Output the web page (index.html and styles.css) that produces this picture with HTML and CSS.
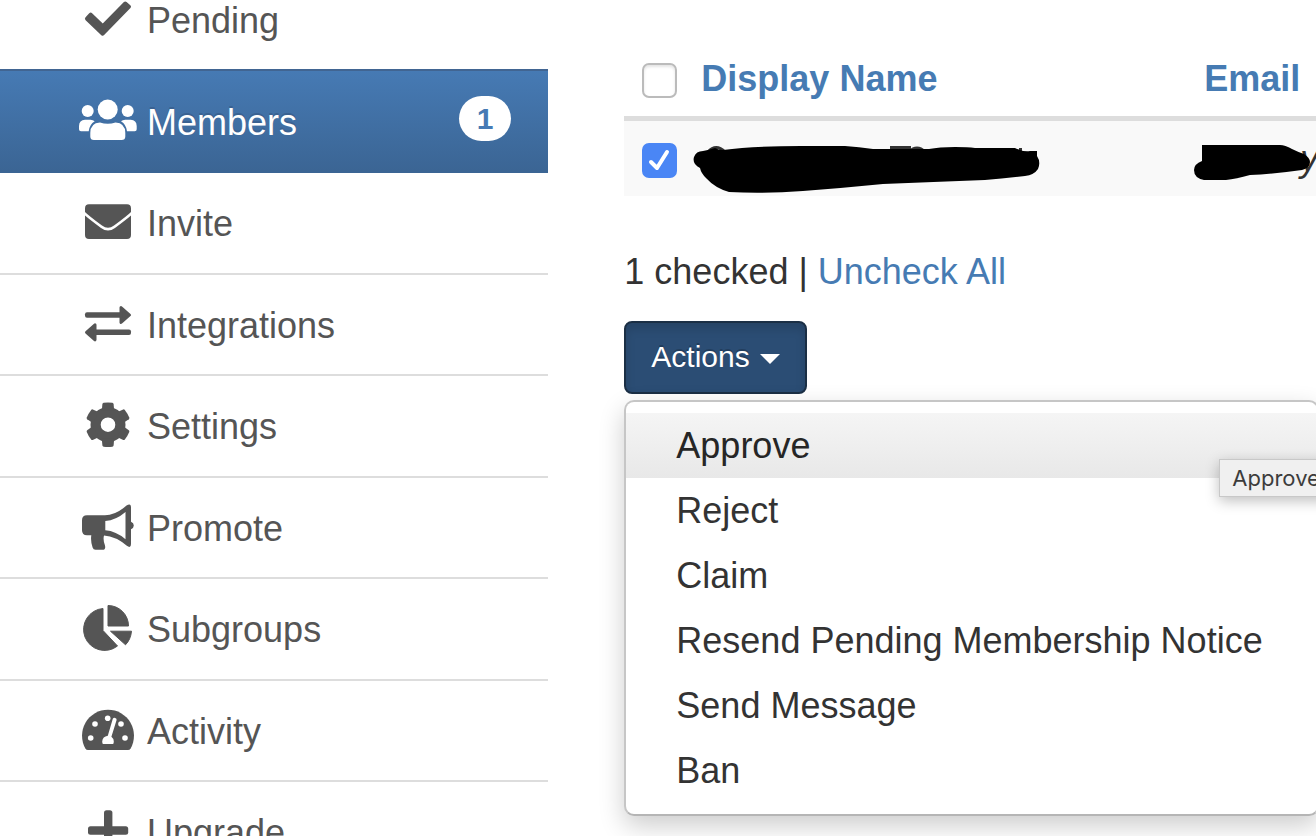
FILE: index.html
```html
<!DOCTYPE html>
<html lang="en">
  <head>
    <meta charset="UTF-8" />
    <meta name="viewport" content="width=device-width, initial-scale=1.0" />
    <title>Members</title>
    <link rel="stylesheet" href="styles.css">
  </head>
  <body>
    <div class="page">
      <!-- Group menu -->
      <nav class="sidebar">
        <ul class="nav-list">
          <li>
            <a class="nav-link" href="#pending">
              <svg class="icon" viewBox="0 0 60 52" aria-hidden="true">
                <path class="round" d="M12.7 20.7 L9 24.7 L24.7 39.7 L51 12.7 L47.3 9.5 L24.7 32.3 Z" />
              </svg>
              Pending
            </a>
          </li>
          <li>
            <a class="nav-link active" href="#members">
              <svg class="icon" viewBox="0 0 60 52" aria-hidden="true">
                <circle cx="29.7" cy="14.5" r="10" />
                <circle cx="9.7" cy="16" r="6" />
                <circle cx="49.7" cy="16" r="6" />
                <path d="M22 27.5 Q29.7 30 37.5 27.5 Q47.3 28 47.3 38 V41.5 Q47.3 45 43.5 45 H16 Q12.3 45 12.3 41.5 V38 Q12.3 28 22 27.5 Z" />
                <path d="M7 24.8 H12.5 Q15 24.8 16.7 26.3 Q11.5 29.5 10.7 36.3 H3 Q1 36.3 1 34.3 V31 Q1.2 25 7 24.8 Z" />
                <path d="M52.7 24.8 H47.2 Q44.7 24.8 43 26.3 Q48.2 29.5 49 36.3 H56.7 Q58.7 36.3 58.7 34.3 V31 Q58.5 25 52.7 24.8 Z" />
              </svg>
              Members
              <span class="badge">1</span>
            </a>
          </li>
          <li>
            <a class="nav-link" href="#invite">
              <svg class="icon" viewBox="0 0 60 52" aria-hidden="true">
                <path d="M11 7.3 H49 Q53 7.3 53 11.5 V15 Q49 19 36 28.5 Q30 33 24 28.5 Q11 19 7 15 V11.5 Q7 7.3 11 7.3 Z" />
                <path d="M7 18.5 Q11 22 23 31 Q30 36 37 31 Q49 22 53 18.5 V38 Q53 42 49 42 H11 Q7 42 7 38 Z" />
              </svg>
              Invite
            </a>
          </li>
          <li>
            <a class="nav-link" href="#integrations">
              <svg class="icon" viewBox="0 0 60 52" aria-hidden="true">
                <rect x="7" y="13.3" width="38" height="5.4" rx="2" />
                <path class="round-thin" d="M43 8.5 L51.5 16 L43 23.5 Z" />
                <rect x="15" y="30.6" width="38" height="5.4" rx="2" />
                <path class="round-thin" d="M17 25.8 L8.5 33.3 L17 40.8 Z" />
              </svg>
              Integrations
            </a>
          </li>
          <li>
            <a class="nav-link" href="#settings">
              <svg class="icon" viewBox="0 0 60 52" aria-hidden="true">
                <g transform="translate(30 24.7)">
                  <path fill-rule="evenodd" d="M0 -17.5 A17.5 17.5 0 1 1 0 17.5 A17.5 17.5 0 1 1 0 -17.5 Z M0 -7.3 A7.3 7.3 0 1 0 0 7.3 A7.3 7.3 0 1 0 0 -7.3 Z" />
                  <path id="tooth" d="M-6.2 -14 L-5.6 -20.8 Q-5.4 -21.8 -4.4 -22 Q0 -22.6 4.4 -22 Q5.4 -21.8 5.6 -20.8 L6.2 -14 Z" />
                  <use href="#tooth" transform="rotate(60)" />
                  <use href="#tooth" transform="rotate(120)" />
                  <use href="#tooth" transform="rotate(180)" />
                  <use href="#tooth" transform="rotate(240)" />
                  <use href="#tooth" transform="rotate(300)" />
                </g>
              </svg>
              Settings
            </a>
          </li>
          <li>
            <a class="nav-link" href="#promote">
              <svg class="icon" viewBox="0 0 60 52" aria-hidden="true">
                <path fill-rule="evenodd" d="M9 13.3 H27 Q38 13 48.5 3.5 Q53 0.5 53 5.5 V19.7 Q55.8 21 55.8 23.5 Q55.8 26 53 27.3 V42 Q53 47 48.5 43.5 Q38 34.5 26 33.5 Q24.8 38 27 43.5 Q28 47.7 24.5 47.7 H17.5 Q15.3 47.7 14.6 45.5 Q12.4 39 13.3 33.2 H9 Q4 33.2 4 28.2 V18.3 Q4 13.3 9 13.3 Z M27.3 19 V28.2 Q38 29 47.5 37.2 V10 Q38 18.2 27.3 19 Z" />
              </svg>
              Promote
            </a>
          </li>
          <li>
            <a class="nav-link" href="#subgroups">
              <svg class="icon" viewBox="0 0 60 52" aria-hidden="true">
                <path class="round-hair" d="M25 5.5 V27.5 L39.5 43 A21 21 0 1 1 25 5.5 Z" />
                <path class="round-hair" d="M30 2.5 A20.5 20.5 0 0 1 50.5 23 H30 Z" />
                <path class="round-hair" d="M32.5 28.2 H53.5 Q52.7 36.5 47.5 41.8 Z" />
              </svg>
              Subgroups
            </a>
          </li>
          <li>
            <a class="nav-link" href="#activity">
              <svg class="icon" viewBox="0 0 60 52" aria-hidden="true">
                <path d="M30 4.7 A26 26 0 0 1 52.5 43.7 Q51.7 45 50 45 H10 Q8.3 45 7.5 43.7 A26 26 0 0 1 30 4.7 Z" />
                <g class="cutout">
                  <circle cx="29.7" cy="13.2" r="2.8" />
                  <circle cx="17" cy="19" r="2.8" />
                  <circle cx="12.7" cy="33" r="2.8" />
                  <circle cx="43" cy="19" r="2.8" />
                  <circle cx="47" cy="33" r="2.8" />
                  <path d="M34.8 13.8 Q35.6 12.4 37.2 12.9 Q38.9 13.5 38.6 15.1 L33.4 31.8 Q35.8 33.6 35.8 36.4 Q35.8 39 34.8 39 H25.2 Q24.2 39 24.2 36.4 Q24.6 31.6 29.8 30.8 Z" />
                </g>
              </svg>
              Activity
            </a>
          </li>
          <li>
            <a class="nav-link" href="#upgrade">
              <svg class="icon" viewBox="0 0 60 52" aria-hidden="true">
                <rect x="26" y="4.3" width="8.4" height="40" rx="2.5" />
                <rect x="10" y="20.3" width="40.2" height="8.4" rx="2.5" />
              </svg>
              Upgrade
            </a>
          </li>
        </ul>
      </nav>

      <!-- Member list -->
      <main class="content">
        <table class="members">
          <thead>
            <tr>
              <th class="check-col"><input type="checkbox" class="check" aria-label="Check all" /></th>
              <th class="name-col"><a href="#name">Display Name</a></th>
              <th><a href="#email">Email</a></th>
            </tr>
          </thead>
          <tbody>
            <tr>
              <td><input type="checkbox" class="check" aria-label="Check member" checked /></td>
              <td>
                <div class="redacted">
                  <svg class="ink ink-name" viewBox="0 0 350 52" aria-hidden="true">
                    <path class="letter" d="M15 11 Q23 2 32 11 M216 11 Q224 3 232 11" />
                    <path class="letter-fill" d="M197 5 H218 V10 H197 Z M326 7 h3 v5 h-3 Z" />
                    <path d="M10 10 Q16 9 22 7 Q25 9 30 9 Q60 5 108 5 H152 Q166 6 180 8 H236 Q246 6 262 6 Q275 6 282 7 H322 Q330 11 337 10 H344 V15 Q348 21 345 28 Q341 34 332 35 Q312 37 292 39 Q240 41 190 43 Q150 47 110 50 Q70 53 36 51 Q22 47 13 37 Q8 32 7 27 Q-1 23 1 16 Q3 10 10 10 Z" />
                  </svg>
                </div>
              </td>
              <td>
                <div class="redacted redacted-email">
                  y
                  <svg class="ink ink-email" viewBox="0 0 118 40" aria-hidden="true">
                    <path d="M8 3 H86 Q91 3 98 7 Q104 10 110 12 Q116 16 116 20 Q116 26 108 28 Q80 32 56 33 Q42 37 32 38 H10 Q0 36 0 28 Q0 22 8 19 Z" />
                  </svg>
                </div>
              </td>
            </tr>
          </tbody>
        </table>

        <p class="summary">1 checked | <a href="#uncheck">Uncheck All</a></p>

        <div class="dropdown">
          <button type="button" class="btn-actions" aria-expanded="true">
            Actions <span class="caret"></span>
          </button>
          <ul class="menu">
            <li class="hover">
              <a href="#approve">Approve</a>
              <span class="tooltip" role="tooltip">Approve</span>
            </li>
            <li><a href="#reject">Reject</a></li>
            <li><a href="#claim">Claim</a></li>
            <li><a href="#resend">Resend Pending Membership Notice</a></li>
            <li><a href="#message">Send Message</a></li>
            <li><a href="#ban">Ban</a></li>
          </ul>
        </div>
      </main>
    </div>
  </body>
</html>
```
FILE: styles.css
```css
* {
  box-sizing: border-box;
}
body {
  margin: 0;
  height: 100vh;
  overflow: hidden;
  background: white;
  color: #333;
  font-family: "Helvetica Neue", "Liberation Sans", Arial, sans-serif;
  font-size: 36px;
  line-height: 1.43;
}
a {
  color: #467bb3;
  text-decoration: none;
}
ul {
  list-style: none;
  margin: 0;
  padding: 0;
}
.page {
  display: grid;
  grid-template-columns: 5fr 7fr;
}

/* Sidebar */
.nav-list {
  margin-top: -32px;
}
.nav-link {
  display: flex;
  align-items: center;
  gap: 9px;
  padding: 25px 37px 23px 78px;
  margin-bottom: -2px;
  border-top: 2px solid #ddd;
  border-bottom: 2px solid #ddd;
  color: #555;
}
.nav-link.active {
  position: relative;
  border-top-color: #416592;
  border-bottom-color: #3b6594;
  background: linear-gradient(#467ab4, #3b6594);
  color: white;
  text-shadow: 0 -2px 0 #3a6292;
}
.icon {
  flex: none;
  width: 60px;
  height: 52px;
  margin: -2px 0 0;
  fill: currentColor;
}
.round {
  stroke: currentColor;
  stroke-width: 4;
  stroke-linejoin: round;
}
.round-thin {
  stroke: currentColor;
  stroke-width: 3;
  stroke-linejoin: round;
}
.round-hair {
  stroke: currentColor;
  stroke-width: 1;
  stroke-linejoin: round;
}
.cutout {
  fill: white;
}
.badge {
  margin-left: auto;
  margin-bottom: 7px;
  padding: 6px 18px;
  border-radius: 23px;
  background: white;
  color: #467ab4;
  font-size: 30px;
  font-weight: bold;
  line-height: 33px;
  text-shadow: none;
}

/* Members table */
.content {
  min-width: 0;
  padding: 41px 0 0 76px;
}
.members {
  width: 100%;
  table-layout: fixed;
  border-collapse: separate;
  border-spacing: 0;
}
.members th,
.members td {
  padding: 12px 0 12px 8px;
  text-align: left;
  vertical-align: top;
}
.members th {
  border-bottom: 5px solid #ddd;
}
.members td {
  background: #f9f9f9;
}
.members .check-col {
  width: 69px;
}
.members .name-col {
  width: 503px;
}
.check {
  display: block;
  appearance: none;
  width: 35px;
  height: 35px;
  margin: 10px 0 0 10px;
  border: 2px solid #bbb;
  border-radius: 7px;
  background: white;
  box-shadow: inset 0 2px 3px #e4e4e4;
}
.check:checked {
  border-color: #4a86f5;
  background: #4a86f5 url("data:image/svg+xml,%3Csvg xmlns='http://www.w3.org/2000/svg' viewBox='0 0 31 31'%3E%3Cpath d='M7 17 L13 23 L23 7' fill='none' stroke='white' stroke-width='4' stroke-linecap='round' stroke-linejoin='round'/%3E%3C/svg%3E") center no-repeat;
  box-shadow: none;
}
.redacted {
  position: relative;
  height: 51px;
}
.redacted-email {
  padding-left: 96px;
  font-style: italic;
}
.ink {
  position: absolute;
  fill: black;
}
.ink-name {
  top: 8px;
  left: -8px;
  width: 350px;
  height: 52px;
}
.ink-email {
  top: 9px;
  left: -10px;
  width: 118px;
  height: 40px;
}
.letter {
  fill: none;
  stroke: #333;
  stroke-width: 3;
}
.letter-fill {
  fill: #333;
}

/* Actions */
.summary {
  margin: 50px 0 23px;
}
.dropdown {
  position: relative;
}
.btn-actions {
  display: flex;
  align-items: center;
  gap: 10px;
  padding: 12px 25px 14px;
  border: 2px solid #1b2f45;
  border-radius: 8px;
  background: #2b4d74;
  box-shadow: inset 0 6px 10px rgba(0, 0, 0, 0.13);
  color: white;
  font-family: inherit;
  font-size: 30px;
  line-height: 43px;
  text-shadow: 0 -2px 0 rgba(0, 0, 0, 0.2);
  cursor: pointer;
}
.caret {
  margin-top: 6px;
  border-top: 10px solid white;
  border-left: 10px solid transparent;
  border-right: 10px solid transparent;
}
.menu {
  position: absolute;
  top: 100%;
  left: 0;
  margin-top: 6px;
  padding: 11px 0;
  border: 2px solid #c6c6c6;
  border-bottom-color: #b5b5b5;
  border-radius: 10px;
  background: white;
  box-shadow: 0 10px 26px rgba(0, 0, 0, 0.2);
  line-height: 51px;
  white-space: nowrap;
}
.menu li {
  position: relative;
}
.menu a {
  display: block;
  padding: 7px 54px 7px 50px;
  color: #333;
}
.menu .hover a {
  background: linear-gradient(#f5f5f5, #e8e8e8);
  color: #262626;
}
.tooltip {
  position: absolute;
  top: 46px;
  left: 593px;
  z-index: 1;
  padding: 4px 12px;
  border: 1px solid #c8c8c8;
  background: #f0f0f0;
  box-shadow: 0 4px 14px rgba(0, 0, 0, 0.25);
  color: #3c3c3c;
  font-family: Inter, sans-serif;
  font-size: 22px;
  line-height: 28px;
}
```
